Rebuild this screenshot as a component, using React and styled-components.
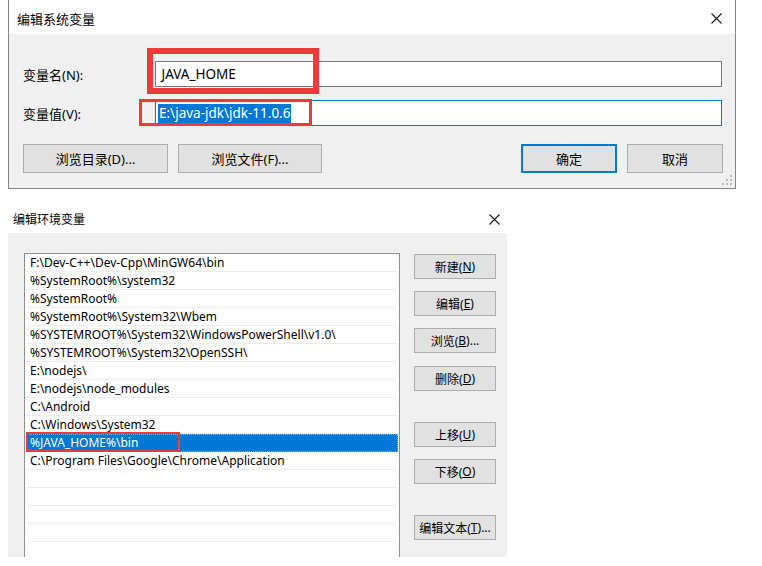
import React from "react";
import styled, { createGlobalStyle } from "styled-components";

const GlobalStyle = createGlobalStyle`
  html, body { margin: 0; padding: 0; background: #fff; }
  body { font-family: "Noto Sans", "Noto Sans CJK SC", sans-serif; color: #000; }
  * { box-sizing: border-box; }
`;

const Page = styled.div`
  width: 762px;
  height: 566px;
  overflow: hidden;
  background: #fff;
`;

const TopDialog = styled.div`
  position: relative;
  margin-left: 8px;
  width: 728px;
  height: 189px;
  border: 1px solid #858585;
  border-top: none;
  display: flex;
  flex-direction: column;
`;

const TitleBar = styled.div`
  height: ${(p) => p.$h}px;
  background: #fff;
  display: flex;
  align-items: center;
  justify-content: space-between;
  padding-left: ${(p) => p.$pl}px;
  padding-top: ${(p) => p.$pt || 0}px;
  font-size: ${(p) => p.$fs}px;
  width: ${(p) => (p.$w ? `${p.$w}px` : "auto")};
`;

const CloseIcon = styled.svg`
  width: 11px;
  height: 11px;
  margin-right: ${(p) => p.$mr}px;
`;

const TopBody = styled.div`
  flex: 1;
  background: #f0f0f0;
  padding: 27px 12px 0 14px;
  display: flex;
  flex-direction: column;
`;

const FieldRow = styled.div`
  display: flex;
  align-items: center;
  height: 26px;
  margin-bottom: 13px;
`;

const FieldLabel = styled.label`
  width: 132px;
  font-size: 13px;
`;

const TextBox = styled.div`
  width: 567px;
  height: 26px;
  background: #fff;
  border: 1px solid ${(p) => (p.$focused ? "#0078d7" : "#7a7a7a")};
  font-size: 13.5px;
  display: flex;
  align-items: center;
  padding-left: 2px;
`;

const Selected = styled.span`
  background: #0078d7;
  color: #fff;
  line-height: 19px;
  padding: 0 1px;
`;

const ButtonRow = styled.div`
  display: flex;
  margin-top: 5px;
  gap: 10px;
`;

const Spacer = styled.div`
  flex: 1;
`;

const WinButton = styled.div`
  width: ${(p) => p.$w}px;
  height: ${(p) => p.$h}px;
  margin-top: ${(p) => p.$mt || 0}px;
  background: #e1e1e1;
  border: ${(p) => (p.$primary ? "2px solid #0078d7" : "1px solid #adadad")};
  font-size: ${(p) => p.$fs}px;
  display: flex;
  align-items: center;
  justify-content: center;
  flex-shrink: 0;
`;

const RedBox = styled.div`
  position: absolute;
  left: ${(p) => p.$x}px;
  top: ${(p) => p.$y}px;
  width: ${(p) => p.$w}px;
  height: ${(p) => p.$h}px;
  border: ${(p) => p.$t}px solid #f03a3a;
  pointer-events: none;
`;

const Grip = styled.svg`
  position: absolute;
  right: 3px;
  bottom: 3px;
  width: 10px;
  height: 10px;
`;

const BottomDialog = styled.div`
  margin-top: 16px;
  display: flex;
  flex-direction: column;
`;

const BottomBody = styled.div`
  margin-left: 8px;
  width: 499px;
  height: 324px;
  background: #f0f0f0;
  display: flex;
  align-items: flex-start;
  gap: 14px;
  padding: 20px 11px 0 16px;
  overflow: hidden;
`;

const ListBox = styled.div`
  position: relative;
  width: 376px;
  height: 340px;
  flex-shrink: 0;
  background: #fff;
  border: 1px solid #8f8f8f;
`;

const ListRow = styled.div`
  height: 18px;
  border-bottom: 1px solid ${(p) => (p.$selected ? "#0078d7" : "#eeeeee")};
  padding-left: 4px;
  margin: 0 1px;
  font-size: 12px;
  line-height: 17px;
  white-space: nowrap;
  background: ${(p) => (p.$selected ? "#0078d7" : "#fff")};
  color: ${(p) => (p.$selected ? "#fff" : "#000")};
  outline: ${(p) => (p.$selected ? "1px dotted #7fb6e6" : "none")};
  outline-offset: -1px;
`;

const ButtonCol = styled.div`
  display: flex;
  flex-direction: column;
  width: 82px;
`;

const Close = ({ mr }) => (
  <CloseIcon $mr={mr} viewBox="0 0 11 11">
    <path d="M0.5 0.5 L10.5 10.5 M10.5 0.5 L0.5 10.5" stroke="#1a1a1a" strokeWidth="1.1" fill="none" />
  </CloseIcon>
);

const paths = [
  "F:\\Dev-C++\\Dev-Cpp\\MinGW64\\bin",
  "%SystemRoot%\\system32",
  "%SystemRoot%",
  "%SystemRoot%\\System32\\Wbem",
  "%SYSTEMROOT%\\System32\\WindowsPowerShell\\v1.0\\",
  "%SYSTEMROOT%\\System32\\OpenSSH\\",
  "E:\\nodejs\\",
  "E:\\nodejs\\node_modules",
  "C:\\Android",
  "C:\\Windows\\System32",
  "%JAVA_HOME%\\bin",
  "C:\\Program Files\\Google\\Chrome\\Application",
  "",
  "",
  "",
  "",
  "",
  "",
];

const sideButtons = [
  { label: "新建", key: "N", mt: 1 },
  { label: "编辑", key: "E", mt: 12 },
  { label: "浏览", key: "B", mt: 12, dots: true },
  { label: "删除", key: "D", mt: 13 },
  { label: "上移", key: "U", mt: 31 },
  { label: "下移", key: "O", mt: 12 },
  { label: "编辑文本", key: "T", mt: 31, dots: true },
];

export default function App() {
  return (
    <Page>
      <GlobalStyle />
      <TopDialog>
        <TitleBar $h={34} $pl={8} $pt={3} $fs={13}>
          <span>编辑系统变量</span>
          <Close mr={13} />
        </TitleBar>
        <TopBody>
          <FieldRow>
            <FieldLabel>变量名(N):</FieldLabel>
            <TextBox>&nbsp;JAVA_HOME</TextBox>
          </FieldRow>
          <FieldRow>
            <FieldLabel>变量值(V):</FieldLabel>
            <TextBox $focused>
              <Selected>E:\java-jdk\jdk-11.0.6</Selected>
            </TextBox>
          </FieldRow>
          <ButtonRow>
            <WinButton $w={145} $h={29} $fs={13}>浏览目录(D)...</WinButton>
            <WinButton $w={144} $h={29} $fs={13}>浏览文件(F)...</WinButton>
            <Spacer />
            <WinButton $w={96} $h={29} $fs={13} $primary>确定</WinButton>
            <WinButton $w={96} $h={29} $fs={13}>取消</WinButton>
          </ButtonRow>
        </TopBody>
        <RedBox $x={138} $y={48} $w={172} $h={46} $t={6} />
        <RedBox $x={130} $y={99} $w={173} $h={27} $t={3} />
        <Grip viewBox="0 0 10 10">
          {[
            [8, 0],
            [4, 4],
            [8, 4],
            [0, 8],
            [4, 8],
            [8, 8],
          ].map(([x, y]) => (
            <rect key={`${x}-${y}`} x={x} y={y} width="2" height="2" fill="#b9b9b9" />
          ))}
        </Grip>
      </TopDialog>

      <BottomDialog>
        <TitleBar $h={28} $pl={13} $fs={12} $w={507}>
          <span>编辑环境变量</span>
          <Close mr={7} />
        </TitleBar>
        <BottomBody>
          <ListBox>
            {paths.map((p, i) => (
              <ListRow key={i} $selected={i === 10}>
                {p || "\u00a0"}
              </ListRow>
            ))}
            <RedBox $x={1} $y={178} $w={154} $h={20} $t={2} />
          </ListBox>
          <ButtonCol>
            {sideButtons.map((b) => (
              <WinButton key={b.key} $w={82} $h={25} $fs={12} $mt={b.mt}>
                {b.label}(<u>{b.key}</u>){b.dots ? "..." : ""}
              </WinButton>
            ))}
          </ButtonCol>
        </BottomBody>
      </BottomDialog>
    </Page>
  );
}
